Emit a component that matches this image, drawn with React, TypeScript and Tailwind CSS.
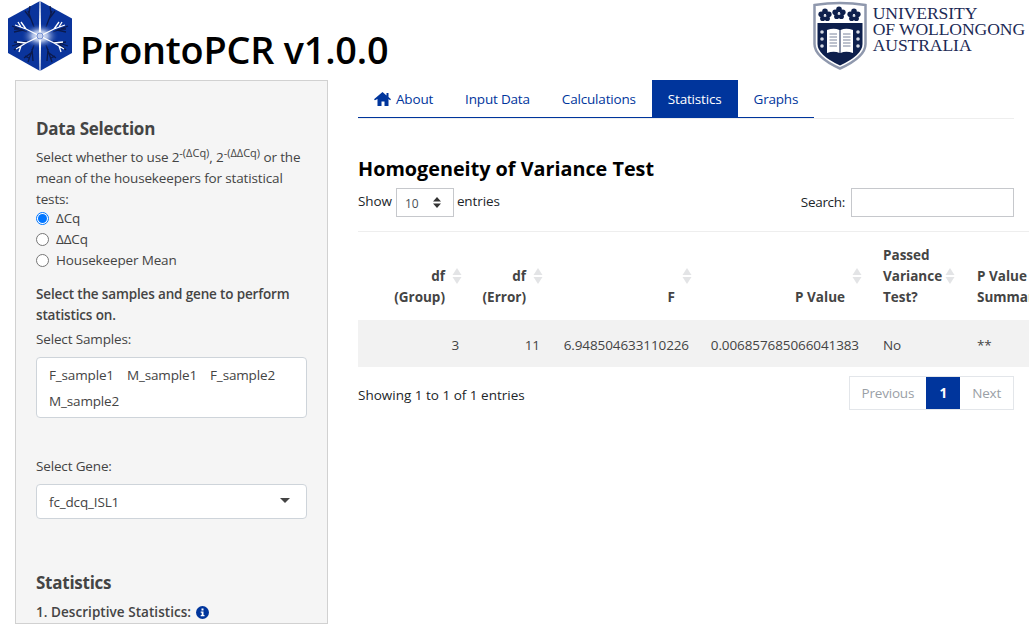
const font = "[font-family:'Open_Sans','Noto_Sans',sans-serif]";

const SortIcon = () => (
  <svg width="10" height="18" viewBox="0 0 10 18" className="absolute top-1/2 right-[7px] -translate-y-1/2" fill="#e3e4e6">
    <path d="M5 1 9.500 8H.5z" />
    <path d="M5 17 .5 10h9z" />
  </svg>
);

const ProntoLogo = () => (
  <svg width="64" height="71" viewBox="0 0 64 71" className="shrink-0">
    <defs>
      <radialGradient id="glow" cx="50%" cy="50%" r="50%">
        <stop offset="0%" stopColor="#ffffff" />
        <stop offset="40%" stopColor="#a9bbe4" />
        <stop offset="100%" stopColor="#0a349c" stopOpacity="0" />
      </radialGradient>
    </defs>
    <path d="M32 0 64 17.500V52L32 70 0 52V17.500z" fill="#0a349c" />
    <g stroke="#0b1a4d" strokeWidth="1.300" fill="none">
      <path d="M26 26 20 10M23 18l-6-8M21 13l1-8M38 26l6-16M41 18l6-8M43 13l-1-8" />
      <path d="M26 44 20 61M23 52l-7 5M21 57l-4-2M38 44l6 17M41 52l7 5M43 57l4-2M24 48l1 12M40 48l-1 12" />
      <path d="M19 31 4 25M11 28l-5 0M15 29 6 31M45 31l15-6M53 28l5 0M49 29l9 2" />
      <path d="M19 40 4 45M11 42l-5-1M15 41l-9 8M45 40l15 5M53 42l5-1M49 41l9 8" />
    </g>
    <ellipse cx="32" cy="35" rx="19" ry="13" fill="url(#glow)" />
    <path d="M30.800 35 31.500 0h1l.7 35-.7 35h-1z" fill="#ffffff" />
    <g stroke="#ffffff" fill="none" strokeWidth="1.300">
      <path d="M32 35 18 28 7 24M18 28l-5-7M13 26l-3-5M32 35l14-7 11-4M46 28l5-7M51 26l3-5" />
      <path d="M32 35 18 42 8 48M18 42l-9-1M13 45l-2 6M32 35l14 7 10 6M46 42l9-1M51 45l2 6" />
    </g>
    <circle cx="32" cy="35" r="3" fill="#c7d2ee" stroke="#7590d3" />
  </svg>
);

const Flower = ({ x, y }: { x: number; y: number }) => (
  <g transform={`translate(${x} ${y})`} fill="#0d1f4c">
    <circle cx="0" cy="-3.800" r="2.800" />
    <circle cx="-3.800" cy="-.8" r="2.800" />
    <circle cx="3.800" cy="-.8" r="2.800" />
    <circle cx="-2.300" cy="3.500" r="2.600" />
    <circle cx="2.300" cy="3.500" r="2.600" />
    <circle cx="0" cy="0" r="1" fill="#c9cedb" />
  </g>
);

const UowShield = () => (
  <svg width="54" height="69" viewBox="0 0 54 69" className="shrink-0">
    <path d="M1.500 4Q27 0 52.500 4V43Q52.500 56 27 67.500 1.500 56 1.500 43z" fill="#ffffff" stroke="#8f98ad" strokeWidth="2.500" />
    <path d="M4.500 22H49.500V43Q49.500 54 27 64.500 4.500 54 4.500 43z" fill="#0d1f4c" />
    <Flower x={12} y={14} />
    <Flower x={26} y={12} />
    <Flower x={41} y={14} />
    <path d="M14 29Q21 26.500 26.500 29V52Q21 49.500 14 52zM27.500 29Q33 26.500 40 29V52Q33 49.500 27.500 52z" fill="#ffffff" />
    <path d="M16.500 33h7.500M16.500 36h7.500M16.500 39h7.500M16.500 42h7.500M16.500 45h7.500M30 33h7.500M30 36h7.500M30 39h7.500M30 42h7.500M30 45h7.500" stroke="#7a849c" strokeWidth="1" />
    <g fill="#d5d9e3">
      <circle cx="9" cy="31" r="1.800" />
      <circle cx="9" cy="38" r="1.800" />
      <circle cx="9" cy="45" r="1.800" />
      <circle cx="45" cy="31" r="1.800" />
      <circle cx="45" cy="38" r="1.800" />
      <circle cx="45" cy="45" r="1.800" />
    </g>
  </svg>
);

const Radio = ({ label, checked }: { label: string; checked?: boolean }) => (
  <div className="flex h-[21px] items-center gap-[7px]">
    {checked ? (
      <span className="flex size-[13px] items-center justify-center rounded-full border border-[#0075ff] bg-white">
        <span className="size-[9px] rounded-full bg-[#0075ff]" />
      </span>
    ) : (
      <span className="size-[13px] rounded-full border border-[#767676] bg-white" />
    )}
    <span>{label}</span>
  </div>
);

const Sup = ({ children }: { children: string }) => (
  <sup className="relative -top-[5px] align-baseline text-[11px] leading-none tracking-normal">{children}</sup>
);

const Tab = ({ children, active }: { children: React.ReactNode; active?: boolean }) => (
  <div
    className={
      active
        ? "flex h-[37px] items-center bg-[#00359c] px-4 pt-[1px] text-white"
        : "flex h-[37px] items-center px-4 pt-[1px] text-[#00359c]"
    }
  >
    {children}
  </div>
);

const columns = [
  { label: ["df", "(Group)"], className: "w-[111px] text-right" },
  { label: ["df", "(Error)"], className: "w-[81px] text-right" },
  { label: ["F"], className: "w-[149px] text-right" },
  { label: ["P Value"], className: "w-[170px] text-right" },
  { label: ["Passed", "Variance", "Test?"], className: "w-[93px] pl-[14px] text-left" },
  { label: ["P Value", "Summary"], className: "w-[123px] pl-[15px] text-left" },
];

const cells = [
  { value: "3", className: "pr-[10px] text-right" },
  { value: "11", className: "pr-[10px] text-right" },
  { value: "6.948504633110226", className: "pr-[10px] text-right" },
  { value: "0.006857685066041383", className: "pr-[10px] text-right" },
  { value: "No", className: "pl-[14px] text-left" },
  { value: "**", className: "pl-[15px] text-left" },
];

export default function App() {
  return (
    <div className={`${font} h-[624px] w-[1029px] overflow-hidden bg-white text-[13.500px] leading-[21px] text-[#212529]`}>
      {/* Header */}
      <header className="flex h-[80px]">
        <div className="flex pt-[1px] pl-[8px]">
          <ProntoLogo />
          <h1 className="mt-[26px] ml-[8px] text-[37.800px] leading-[46px] font-semibold tracking-[-0.2px] whitespace-nowrap text-black">ProntoPCR v1.0.0</h1>
        </div>
        <div className="ml-auto flex items-start pt-[1px] pr-[4px]">
          <UowShield />
          <div className="ml-[6px] pt-[4px] font-['Liberation_Serif',serif] text-[17.600px] leading-[16px] tracking-[-0.1px] text-[#1b2a55]">
            <div>UNIVERSITY</div>
            <div>OF WOLLONGONG</div>
            <div>AUSTRALIA</div>
          </div>
        </div>
      </header>

      <div className="flex">
        {/* Sidebar */}
        <aside className="ml-[15px] h-[544px] w-[313px] shrink-0 border border-[#d1d1d1] bg-[#f5f5f5] px-5 tracking-[-0.15px] text-[#444]">
          <h3 className="mt-[35px] text-[17px] leading-[26px] font-bold tracking-[-0.25px]">Data Selection</h3>
          <p className="mt-[5px] w-[270px]">
            Select whether to use 2<Sup>-(ΔCq)</Sup>, 2<Sup>-(ΔΔCq)</Sup> or the mean of the housekeepers for statistical tests:
          </p>
          <div className="-mt-[2px]">
            <Radio label="ΔCq" checked />
            <Radio label="ΔΔCq" />
            <Radio label="Housekeeper Mean" />
          </div>
          <p className="mt-[13px] font-semibold">Select the samples and gene to perform statistics on.</p>
          <p className="mt-[3px]">Select Samples:</p>
          <div className="mt-[7px] h-[61px] w-[271px] rounded border border-[#ced4da] bg-white px-3 py-[4px] leading-[26px]">
            <div className="flex flex-wrap gap-x-[13px]">
              <span>F_sample1</span>
              <span>M_sample1</span>
              <span>F_sample2</span>
              <span>M_sample2</span>
            </div>
          </div>
          <p className="mt-[38px]">Select Gene:</p>
          <div className="mt-[7px] flex h-[35px] w-[271px] items-center justify-between rounded border border-[#ced4da] bg-white pr-4 pl-3">
            <span className="pt-[2px]">fc_dcq_ISL1</span>
            <svg width="10" height="5" viewBox="0 0 10 5" fill="#444" className="-mt-[2px]">
              <path d="M0 0h10L5 5z" />
            </svg>
          </div>
          <h3 className="mt-[51px] text-[17px] leading-[26px] font-bold tracking-[-0.25px]">Statistics</h3>
          <div className="mt-[6px] flex items-center gap-[5px] tracking-[0.05px]">
            <span className="font-semibold">1. Descriptive Statistics:</span>
            <svg width="13" height="13" viewBox="0 0 13 13" className="-mt-[1px]">
              <circle cx="6.500" cy="6.500" r="6.500" fill="#00359c" />
              <path d="M5.500 2.500h2v2h-2zM4.700 5.500h2.800v3.500h1v1.300H4.700V9h1V6.800h-1z" fill="#ffffff" />
            </svg>
          </div>
        </aside>

        {/* Main panel */}
        <main className="ml-[30px] w-[656px] shrink-0">
          <nav className="flex border-b border-[#eeeeee]">
            <div className="flex border-b border-[#00359c] tracking-[-0.18px]">
              <Tab>
                <svg width="17" height="14" viewBox="0 0 17 14" fill="#00359c" className="mr-[5px]">
                  <path d="M8.500 0 12.500 3.400V1h2v4.100L17 7.300l-.9 1-1.600-1.300V14h-4V9.500h-3V14h-4V7L.9 8.300 0 7.300z" />
                </svg>
                About
              </Tab>
              <Tab>Input Data</Tab>
              <Tab>Calculations</Tab>
              <Tab active>Statistics</Tab>
              <Tab>Graphs</Tab>
            </div>
          </nav>

          <h2 className="mt-[36px] text-[19.800px] leading-[28px] font-bold text-black">Homogeneity of Variance Test</h2>

          <div className="mt-[5px] flex h-[29px] items-center justify-between tracking-[-0.1px]">
            <div className="flex items-center">
              <span className="-mt-[2px]">Show</span>
              <div className="mr-[3px] ml-[4px] flex h-[29px] w-[58px] items-center justify-between border border-[#c6c8cc] pr-[12px] pl-[8px] text-[12px] text-[#495057]">
                <span className="pt-[1px]">10</span>
                <svg width="8" height="11" viewBox="0 0 8 11" fill="#333">
                  <path d="M4 0 8 4.500H0zM4 11 0 6.500h8z" />
                </svg>
              </div>
              <span className="-mt-[2px]">entries</span>
            </div>
            <div className="flex items-center">
              <span className="tracking-[-0.3px]">Search:</span>
              <div className="ml-[6px] h-[29px] w-[163px] border border-[#c6c8cc]" />
            </div>
          </div>

          <div className="mt-[14px] w-[671px] overflow-hidden">
            <table className="w-[727px] table-fixed border-t border-[#eeeeee]">
              <thead>
                <tr className="h-[88px] text-[#444]">
                  {columns.map((col) => (
                    <th
                      key={col.label.join(" ")}
                      className={`relative ${col.className} pr-[24px] pb-[12px] align-bottom font-bold`}
                    >
                      {col.label.map((line) => (
                        <div key={line}>{line}</div>
                      ))}
                      <SortIcon />
                    </th>
                  ))}
                </tr>
              </thead>
              <tbody>
                <tr className="h-[47px] bg-[#f2f2f2] text-[#444]">
                  {cells.map((cell) => (
                    <td key={cell.value} className={`pt-[5px] tracking-[-0.1px] ${cell.className}`}>
                      {cell.value}
                    </td>
                  ))}
                </tr>
              </tbody>
            </table>
          </div>

          <div className="mt-[9px] flex h-[34px] items-center justify-between">
            <span className="pt-[6px]">Showing 1 to 1 of 1 entries</span>
            <div className="flex h-[34px] border border-[#e3e6ea] tracking-[-0.2px] text-[#9aa0a6]">
              <span className="flex items-center px-3 pt-[1px]">Previous</span>
              <span className="flex w-[34px] items-center justify-center bg-[#00359c] pt-[1px] font-bold text-white">1</span>
              <span className="flex items-center px-3 pt-[1px]">Next</span>
            </div>
          </div>
        </main>
      </div>
    </div>
  );
}
